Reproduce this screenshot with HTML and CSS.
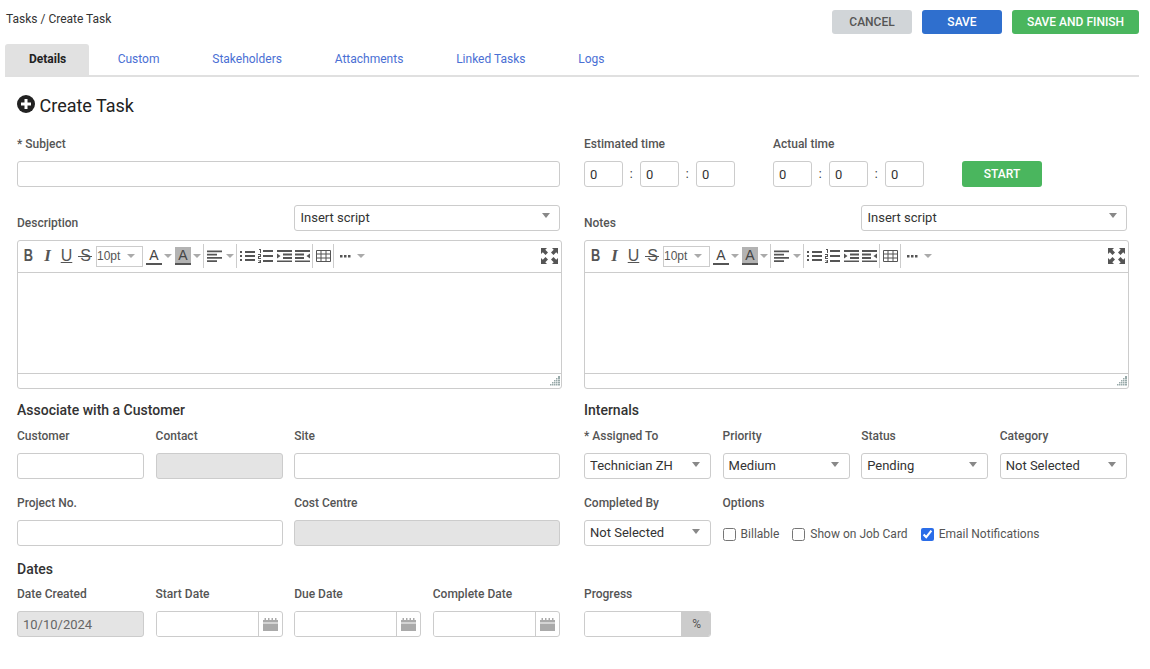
FILE: index.html
```html
<!DOCTYPE html>
<html lang="en">
<head>
  <meta charset="UTF-8">
  <title>Tasks - Create Task</title>
  <link rel="stylesheet" href="styles.css">
</head>
<body>
  <svg class="icon-defs" width="0" height="0">
    <symbol id="i-align" viewBox="0 0 15 12"><path d="M0 .5h15v1.800H0zM0 3.800h10v1.800H0zM0 7h15v1.800H0zM0 10.200h10V12H0z" fill="#555"/></symbol>
    <symbol id="i-bullet" viewBox="0 0 15 12"><path d="M0 1h2v2H0zM0 5h2v2H0zM0 9h2v2H0zM5 1h10v2H5zM5 5h10v2H5zM5 9h10v2H5z" fill="#555"/></symbol>
    <symbol id="i-number" viewBox="0 0 15 14"><path d="M1 0h2v4H2V1H1zM0 5h3v3H1v1h2v1H0V7h2V6H0zM0 11h3v3H0v-1h2v-.4H1v-.6h1v-.4H0zM5 1h10v2H5zM5 6h10v2H5zM5 11h10v2H5z" fill="#555"/></symbol>
    <symbol id="i-indent" viewBox="0 0 15 12"><path d="M0 0h15v2H0zM6 3.500h9v2H6zM6 7h9v2H6zM0 10.500h15v1.500H0zM0 3.500l3.500 2.500L0 8.500z" fill="#555"/></symbol>
    <symbol id="i-outdent" viewBox="0 0 15 12"><path d="M0 0h15v2H0zM0 3.500h9v2H0zM0 7h9v2H0zM0 10.500h15v1.500H0zM15 3.500L11.500 6l3.500 2.500z" fill="#555"/></symbol>
    <symbol id="i-table" viewBox="0 0 15 12"><path d="M.5.500h14v11H.5zM.5 4h14M.5 8h14M5 .500v11M10 .500v11" fill="none" stroke="#555"/></symbol>
    <symbol id="i-dots" viewBox="0 0 11 3"><path d="M0 0h2.500v2.500H0zM4 0h2.500v2.500H4zM8 0h2.500v2.500H8z" fill="#555"/></symbol>
    <symbol id="i-full" viewBox="0 0 17 16"><path d="M0 0h6L4.300 1.800 7 4.500 4.500 7 1.800 4.300 0 6zM17 0v6l-1.800-1.700L12.500 7 10 4.500l2.700-2.700L11 0zM0 16v-6l1.800 1.700L4.500 9 7 11.500l-2.700 2.700L6 16zM17 16h-6l1.700-1.800L10 11.500 12.500 9l2.700 2.700L17 10z" fill="#555"/></symbol>
    <symbol id="i-grip" viewBox="0 0 10 10"><path d="M8 0h2v2H8zM6 2h1.500v1.500H6zM8 2h2v1.500H8zM4 4h1.500v1.500H4zM6 4h1.500v1.500H6zM8 4h2v1.500H8zM2 6h1.500v1.500H2zM4 6h1.500v1.500H4zM6 6h1.500v1.500H6zM8 6h2v1.500H8zM0 8h1.500v1.500H0zM2 8h1.500v1.500H2zM4 8h1.500v1.500H4zM6 8h1.500v1.500H6zM8 8h2v1.500H8z" fill="#9aa"/></symbol>
    <symbol id="i-cal" viewBox="0 0 15 14"><path d="M0 3h1.500V1H3v2h2V1h1.500v2h2V1H10v2h2V1h1.500v2H15v2.500H0zM0 6.500h15V14H0z" fill="#aaa"/></symbol>
  </svg>

  <div class="page">
    <header class="top-bar">
      <div class="breadcrumb">Tasks / Create Task</div>
      <div class="actions">
        <button class="btn btn-grey">CANCEL</button>
        <button class="btn btn-blue">SAVE</button>
        <button class="btn btn-green btn-wide">SAVE AND FINISH</button>
      </div>
    </header>

    <nav class="tabs">
      <a class="tab active">Details</a>
      <a class="tab">Custom</a>
      <a class="tab">Stakeholders</a>
      <a class="tab">Attachments</a>
      <a class="tab">Linked Tasks</a>
      <a class="tab">Logs</a>
    </nav>

    <h1 class="page-title">
      <svg class="title-icon" viewBox="0 0 18 18"><circle cx="9" cy="9" r="9" fill="#222"/><path d="M7.500 4h3v3.500H14v3h-3.500V14h-3v-3.500H4v-3h3.500z" fill="#fff"/></svg>
      Create Task
    </h1>

    <form class="columns">
      <section class="column">
        <label class="field-label">* Subject</label>
        <input class="control" type="text">

        <div class="editor-head">
          <label class="field-label">Description</label>
          <div class="select script-select">
            <select class="control"><option>Insert script</option></select>
          </div>
        </div>
        <div class="editor">
          <div class="toolbar">
            <span class="tb tb-b">B</span><span class="tb tb-i">I</span><span class="tb tb-u">U</span><span class="tb tb-s">S</span>
            <span class="size-box">10pt<i class="caret"></i></span>
            <span class="color-a">A</span><i class="caret"></i>
            <span class="color-a color-bg">A</span><i class="caret"></i>
            <span class="sep"></span>
            <svg class="ico" viewBox="0 0 15 12"><use href="#i-align"/></svg><i class="caret"></i>
            <span class="sep"></span>
            <svg class="ico" viewBox="0 0 15 12"><use href="#i-bullet"/></svg>
            <svg class="ico ico-tall" viewBox="0 0 15 14"><use href="#i-number"/></svg>
            <svg class="ico" viewBox="0 0 15 12"><use href="#i-indent"/></svg>
            <svg class="ico" viewBox="0 0 15 12"><use href="#i-outdent"/></svg>
            <span class="sep sep-table"></span>
            <svg class="ico" viewBox="0 0 15 12"><use href="#i-table"/></svg>
            <span class="sep sep-table"></span>
            <svg class="ico-dots" viewBox="0 0 11 3"><use href="#i-dots"/></svg><i class="caret"></i>
            <svg class="ico-full" viewBox="0 0 17 16"><use href="#i-full"/></svg>
          </div>
          <div class="editor-body"></div>
          <div class="editor-status"><svg class="grip" viewBox="0 0 10 10"><use href="#i-grip"/></svg></div>
        </div>

        <h2 class="section-title">Associate with a Customer</h2>
        <div class="field-grid">
          <div><label class="field-label">Customer</label><input class="control" type="text"></div>
          <div><label class="field-label">Contact</label><input class="control" type="text" disabled></div>
          <div class="span-2"><label class="field-label">Site</label><input class="control" type="text"></div>
          <div class="span-2"><label class="field-label">Project No.</label><input class="control" type="text"></div>
          <div class="span-2"><label class="field-label">Cost Centre</label><input class="control" type="text" disabled></div>
        </div>

        <h2 class="section-title section-dates">Dates</h2>
        <div class="field-grid">
          <div><label class="field-label">Date Created</label><input class="control" type="text" value="10/10/2024" disabled></div>
          <div><label class="field-label">Start Date</label>
            <div class="input-group"><input class="control" type="text"><span class="addon"><svg class="cal" viewBox="0 0 15 14"><use href="#i-cal"/></svg></span></div>
          </div>
          <div><label class="field-label">Due Date</label>
            <div class="input-group"><input class="control" type="text"><span class="addon"><svg class="cal" viewBox="0 0 15 14"><use href="#i-cal"/></svg></span></div>
          </div>
          <div><label class="field-label">Complete Date</label>
            <div class="input-group"><input class="control" type="text"><span class="addon"><svg class="cal" viewBox="0 0 15 14"><use href="#i-cal"/></svg></span></div>
          </div>
        </div>
      </section>

      <section class="column">
        <div class="time-row">
          <div class="time-block">
            <label class="field-label">Estimated time</label>
            <div class="time-inputs">
              <input class="control" type="text" value="0"><span class="colon">:</span>
              <input class="control" type="text" value="0"><span class="colon">:</span>
              <input class="control" type="text" value="0">
            </div>
          </div>
          <div class="time-block">
            <label class="field-label">Actual time</label>
            <div class="time-inputs">
              <input class="control" type="text" value="0"><span class="colon">:</span>
              <input class="control" type="text" value="0"><span class="colon">:</span>
              <input class="control" type="text" value="0">
            </div>
          </div>
          <button class="btn btn-green btn-start" type="button">START</button>
        </div>

        <div class="editor-head">
          <label class="field-label">Notes</label>
          <div class="select script-select">
            <select class="control"><option>Insert script</option></select>
          </div>
        </div>
        <div class="editor">
          <div class="toolbar">
            <span class="tb tb-b">B</span><span class="tb tb-i">I</span><span class="tb tb-u">U</span><span class="tb tb-s">S</span>
            <span class="size-box">10pt<i class="caret"></i></span>
            <span class="color-a">A</span><i class="caret"></i>
            <span class="color-a color-bg">A</span><i class="caret"></i>
            <span class="sep"></span>
            <svg class="ico" viewBox="0 0 15 12"><use href="#i-align"/></svg><i class="caret"></i>
            <span class="sep"></span>
            <svg class="ico" viewBox="0 0 15 12"><use href="#i-bullet"/></svg>
            <svg class="ico ico-tall" viewBox="0 0 15 14"><use href="#i-number"/></svg>
            <svg class="ico" viewBox="0 0 15 12"><use href="#i-indent"/></svg>
            <svg class="ico" viewBox="0 0 15 12"><use href="#i-outdent"/></svg>
            <span class="sep sep-table"></span>
            <svg class="ico" viewBox="0 0 15 12"><use href="#i-table"/></svg>
            <span class="sep sep-table"></span>
            <svg class="ico-dots" viewBox="0 0 11 3"><use href="#i-dots"/></svg><i class="caret"></i>
            <svg class="ico-full" viewBox="0 0 17 16"><use href="#i-full"/></svg>
          </div>
          <div class="editor-body"></div>
          <div class="editor-status"><svg class="grip" viewBox="0 0 10 10"><use href="#i-grip"/></svg></div>
        </div>

        <h2 class="section-title">Internals</h2>
        <div class="field-grid">
          <div><label class="field-label">* Assigned To</label>
            <div class="select"><select class="control"><option>Technician ZH</option></select></div>
          </div>
          <div><label class="field-label">Priority</label>
            <div class="select"><select class="control"><option>Medium</option></select></div>
          </div>
          <div><label class="field-label">Status</label>
            <div class="select"><select class="control"><option>Pending</option></select></div>
          </div>
          <div><label class="field-label">Category</label>
            <div class="select"><select class="control"><option>Not Selected</option></select></div>
          </div>
          <div><label class="field-label">Completed By</label>
            <div class="select"><select class="control"><option>Not Selected</option></select></div>
          </div>
          <div class="span-3"><label class="field-label">Options</label>
            <div class="options">
              <label class="check"><input type="checkbox">Billable</label>
              <label class="check"><input type="checkbox">Show on Job Card</label>
              <label class="check"><input type="checkbox" checked>Email Notifications</label>
            </div>
          </div>
        </div>

        <div class="field-grid progress-row">
          <div><label class="field-label">Progress</label>
            <div class="input-group"><input class="control" type="text"><span class="addon addon-grey">%</span></div>
          </div>
        </div>
      </section>
    </form>
  </div>
</body>
</html>
```

FILE: styles.css
```css
* {
  box-sizing: border-box;
}
body {
  margin: 0;
  font-family: Roboto, Arial, sans-serif;
  font-size: 12px;
  color: #333;
  background: #fff;
}
.icon-defs {
  display: block;
  height: 0;
}
.page {
  width: 1139px;
  padding-left: 5px;
}

/* Top bar */
.top-bar {
  display: flex;
  justify-content: space-between;
  padding-top: 10px;
  height: 34px;
}
.breadcrumb {
  padding-left: 1px;
  margin-top: 2px;
  line-height: 14px;
  color: #333;
}
.actions {
  display: flex;
  gap: 10px;
}
.btn {
  width: 80px;
  height: 24px;
  border: none;
  border-radius: 3px;
  font-family: inherit;
  font-size: 12px;
  font-weight: 500;
  color: #fff;
  padding: 0;
}
.btn-grey {
  background: #d1d5d8;
  color: #555;
}
.btn-blue {
  background: #2f6fce;
}
.btn-green {
  background: #4ab65e;
}
.btn-wide {
  width: 127px;
}

/* Tabs */
.tabs {
  display: flex;
  height: 33px;
  margin-top: 10px;
  border-bottom: 2px solid #e0e0e0;
}
.tab {
  padding: 0 26.4px;
  line-height: 30px;
  color: #4a6fd4;
}
.tab.active {
  padding: 0 23px 0 24px;
  margin-right: 2px;
  height: 31px;
  background: #e1e1e1;
  border-radius: 3px 3px 0 0;
  color: #222;
  font-weight: 700;
}

.page-title {
  display: flex;
  align-items: center;
  gap: 4.5px;
  margin: 17px 0 0 12px;
  height: 22px;
  font-size: 18px;
  font-weight: 400;
  color: #222;
}
.title-icon {
  width: 18px;
  height: 18px;
  margin-top: -3px;
}

/* Form */
.columns {
  display: flex;
  gap: 24px;
  margin: 21px 0 0 12px;
}
.column {
  width: 543px;
}
.field-label {
  display: block;
  height: 14px;
  margin-bottom: 10px;
  font-size: 12px;
  line-height: 14px;
  font-weight: 500;
  color: #555;
}
.control {
  display: block;
  width: 100%;
  height: 26px;
  padding: 0 5px;
  border: 1px solid #ccc;
  border-radius: 3px;
  background: #fff;
  font-family: inherit;
  font-size: 13px;
  color: #333;
}
.control:disabled {
  background: #e4e4e4;
  color: #666;
}
.select {
  position: relative;
}
.select select {
  appearance: none;
  padding-bottom: 2px;
}
.select::after {
  content: "";
  position: absolute;
  right: 11px;
  top: 9px;
  border-left: 4px solid transparent;
  border-right: 4px solid transparent;
  border-top: 5px solid #888;
}

/* Editor */
.editor-head {
  display: flex;
  justify-content: space-between;
  align-items: flex-end;
  height: 26px;
  margin-top: 18px;
}
.editor-head .field-label {
  margin-bottom: 1px;
}
.script-select {
  width: 266px;
}
.script-select select {
  padding-left: 5.5px;
}
.script-select::after {
  right: 10px;
  top: 8px;
}
.editor {
  width: 545px;
  height: 149px;
  margin-top: 9px;
  border: 1px solid #ccc;
  border-radius: 3px;
  display: flex;
  flex-direction: column;
}
.toolbar {
  display: flex;
  align-items: center;
  height: 32px;
  padding: 0 0 1px 1px;
  border-bottom: 1px solid #ccc;
  color: #555;
}
.tb {
  position: relative;
  width: 19px;
  text-align: center;
  font-family: "Liberation Sans", Arial, sans-serif;
  font-size: 16px;
  line-height: 20px;
  color: #555;
}
.tb-b {
  font-weight: 700;
  transform: scaleX(.8);
}
.tb-i {
  font-family: "Liberation Serif", serif;
  font-size: 17px;
  font-weight: 700;
  font-style: italic;
}
.tb-u {
  text-decoration: underline;
}
.tb-s::after {
  content: "";
  position: absolute;
  left: 2px;
  right: 3px;
  top: 10px;
  height: 1px;
  background: #555;
}
.size-box {
  display: flex;
  align-items: center;
  justify-content: space-between;
  width: 47px;
  height: 21px;
  margin-left: 1px;
  padding: 0 7px 0 0;
  border: 1px solid #ccc;
  font-family: "Liberation Sans", Arial, sans-serif;
  font-size: 12px;
  color: #555;
}
.caret {
  display: inline-block;
  border-left: 4px solid transparent;
  border-right: 4px solid transparent;
  border-top: 4px solid #aaa;
}
.color-a {
  width: 16px;
  height: 18px;
  margin: 0 2px 0 3px;
  border-bottom: 2px solid #555;
  text-align: center;
  font-family: "Liberation Sans", Arial, sans-serif;
  font-size: 14px;
  line-height: 17px;
  color: #444;
}
.color-bg {
  background: #b3b3b3;
}
.sep {
  width: 1px;
  height: 24px;
  margin: 0 3px 0 2px;
  background: #ccc;
}
.ico {
  width: 15px;
  height: 12px;
  margin-right: 3.5px;
}
.ico-tall {
  height: 14px;
}
.sep-table {
  margin-left: -1.5px;
}
.ico-dots {
  width: 11px;
  height: 3px;
  margin: 0 6px 0 3px;
}
.ico-full {
  width: 17px;
  height: 16px;
  margin-left: auto;
  margin-right: 3px;
}
.editor-body {
  flex: 1;
}
.editor-status {
  display: flex;
  justify-content: flex-end;
  align-items: flex-end;
  height: 15px;
  padding: 0 1px 2px 0;
  border-top: 1px solid #ccc;
}
.grip {
  width: 10px;
  height: 10px;
}

/* Field grids */
.section-title {
  margin: 13px 0 10px;
  height: 17px;
  font-size: 14px;
  line-height: 17px;
  font-weight: 500;
  color: #333;
}
.section-dates {
  margin-top: 15px;
  margin-bottom: 9px;
}
.field-grid {
  display: grid;
  grid-template-columns: repeat(4, 1fr);
  column-gap: 11.33px;
  row-gap: 17px;
}
.span-2 {
  grid-column: span 2;
}
.span-3 {
  grid-column: span 3;
}
.progress-row {
  margin-top: 41px;
}
.input-group {
  display: flex;
  height: 26px;
  border: 1px solid #ccc;
  border-radius: 3px;
  overflow: hidden;
}
.input-group .control {
  flex: 1;
  min-width: 0;
  height: 24px;
  border: none;
  border-radius: 0;
}
.addon {
  display: flex;
  align-items: center;
  justify-content: center;
  width: 24px;
  border-left: 1px solid #ccc;
}
.addon-grey {
  width: 29px;
  padding-left: 2px;
  background: #ccc;
  border-left: none;
  font-size: 12px;
  color: #555;
}
.cal {
  width: 15px;
  height: 14px;
}
.options {
  display: flex;
  align-items: center;
  gap: 13px;
  height: 26px;
  padding-top: 2px;
}
.check {
  display: flex;
  align-items: center;
  font-size: 12px;
  color: #555;
}
.check input {
  width: 13px;
  height: 13px;
  margin: 0 5px 0 0;
  accent-color: #2b6de8;
}

/* Time */
.time-row {
  display: flex;
}
.time-block {
  margin-right: 38.5px;
}
.time-inputs {
  display: flex;
  align-items: center;
}
.time-inputs .control {
  width: 38.5px;
}
.colon {
  width: 17.5px;
  text-align: center;
  font-size: 12px;
}
.btn-start {
  height: 26px;
  margin-top: 24px;
}
```
